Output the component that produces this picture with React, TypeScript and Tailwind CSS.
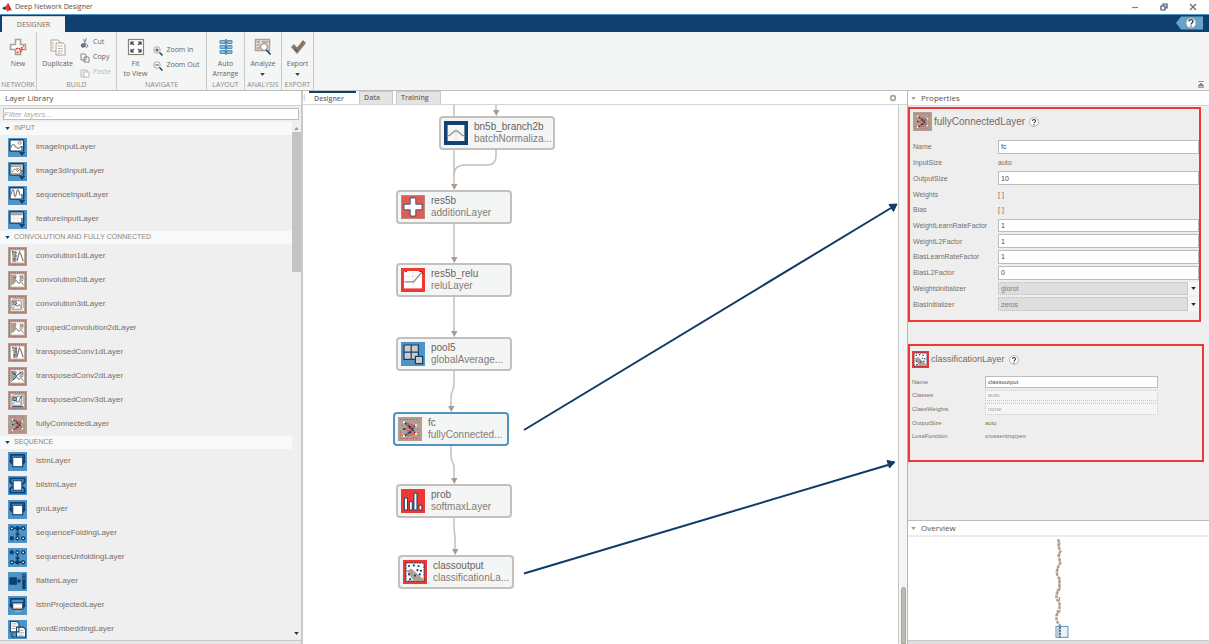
import React from "react";

const SANS = "font-['Liberation_Sans',Arial,sans-serif]";
const UI = "font-['Open_Sans','Noto_Sans',sans-serif]";

const NAVY = "#0f4070";
const BLUE = "#4f94c4";
const TAN = "#b0a093";
const RED = "#ee3831";
const GREY = "#8a817b";

type IconKind =
  | "image" | "image3d" | "sequence" | "feature"
  | "conv1" | "conv2" | "conv3" | "grouped" | "tconv1" | "tconv2" | "tconv3" | "full"
  | "lstm" | "bilstm" | "gru" | "fold" | "unfold" | "flatten" | "projected" | "embedding"
  | "batch" | "add" | "relu" | "pool" | "softmax" | "classify";

function Dots({ pts, r = 1.5, fill = NAVY }: { pts: number[][]; r?: number; fill?: string }) {
  return (
    <>
      {pts.map(([x, y]) => (
        <circle key={`${x}-${y}`} cx={x} cy={y} r={r} fill={fill} />
      ))}
    </>
  );
}

function InputBase({ children }: { children: React.ReactNode }) {
  return (
    <>
      <rect width="20" height="20" fill={BLUE} />
      <rect x="2" y="1.8" width="14.5" height="12" rx="1" fill="#fff" stroke={NAVY} strokeWidth="1.5" />
      {children}
      <path d="M14.7 8.500v8M12.700 15.500l2 2.500 2-2.500z" stroke={NAVY} strokeWidth="1.3" fill={NAVY} />
      <path d="M14.7 10v5" stroke={TAN} strokeWidth=".9" />
    </>
  );
}

function ConvBase({ children }: { children: React.ReactNode }) {
  return (
    <>
      <rect width="20" height="20" fill={TAN} />
      <rect x="3" y="3.500" width="14" height="13" fill="#fff" />
      {children}
      <rect x="1.5" y="1.5" width="17" height="17" fill="none" stroke={RED} strokeWidth="1" strokeDasharray="1 1" />
    </>
  );
}

function glyph(kind: IconKind) {
  switch (kind) {
    case "image":
      return (
        <InputBase>
          <path d="M3 10q2-5 4-2t4 3l3-2" stroke={GREY} fill="none" strokeWidth="1.2" />
          <circle cx="12.3" cy="5" r="1.6" fill="none" stroke={GREY} />
        </InputBase>
      );
    case "image3d":
      return (
        <InputBase>
          <rect x="3" y="4.5" width="10" height="8" fill="none" stroke={GREY} />
          <path d="M3 5l2-2h10v7M4 11l3-4 3 3 3-3" stroke={GREY} fill="none" />
          <circle cx="10" cy="7" r="1.3" fill={TAN} />
        </InputBase>
      );
    case "sequence":
      return (
        <InputBase>
          <path d="M3 10c1.500-8 3-7 3.500-2s2 3 2.500-1 2.500-4 3.500 3" stroke={GREY} fill="none" strokeWidth="1.3" />
        </InputBase>
      );
    case "feature":
      return (
        <InputBase>
          <rect x="3" y="3" width="12.5" height="2.6" fill={TAN} />
          <path d="M3 8.5h12M6.5 6v7M10.5 6v7" stroke="#ddd" strokeWidth=".7" />
        </InputBase>
      );
    case "conv1":
    case "tconv1":
      return (
        <ConvBase>
          <path d="M9.500 15l2.500-10 2 4 2 6" stroke={GREY} fill="none" strokeWidth="1.300" />
          <rect x={kind === "conv1" ? 4.5 : 5.5} y="4" width="4" height="12" fill={TAN} />
          <path d="M5 4v4M8.500 5v8M6.500 12v3" stroke={NAVY} strokeWidth="1" strokeDasharray="2 1.4" />
        </ConvBase>
      );
    case "conv2":
    case "grouped":
    case "tconv2": {
      const line = kind === "grouped" ? GREY : NAVY;
      return (
        <ConvBase>
          <path d="M3 4h5.500v6l-3 3L3 16z" fill={TAN} />
          <path d="M5 14l3.500-4 3 3 2-2 3 4" stroke={TAN} fill="none" strokeWidth="1.300" />
          <path d="M12.500 5.500h4v3.500h-4z" fill={TAN} />
          <path d="M6 8l3-2M12 5.500l4-.5M12 9.500l4 .5" stroke={line} strokeWidth=".9" strokeDasharray="1.500 .8" />
          {kind === "tconv2" && <path d="M4 5l5 4 4-3M5 14l4-4" stroke={NAVY} fill="none" strokeWidth="1" />}
        </ConvBase>
      );
    }
    case "conv3":
    case "tconv3":
      return (
        <ConvBase>
          <path d="M4 6l2-2h10v9l-2 2M14 6v9H4V6z" stroke={GREY} fill="none" strokeWidth=".9" />
          <path d="M5 14l3-4 2 2 2-2 2 4" stroke={TAN} fill="none" strokeWidth="1.200" />
          <path d="M5 7h4v3H5z" fill={TAN} stroke={NAVY} strokeWidth=".8" strokeDasharray={kind === "tconv3" ? "none" : "1.5 1"} />
          {kind === "tconv3" && <path d="M4 16.500h12M12 9l3-4" stroke={NAVY} strokeWidth="1" />}
        </ConvBase>
      );
    case "full":
      return (
        <>
          <rect width="20" height="20" fill={TAN} />
          <path d="M2 2h16M2 18h16M3 7h2M16 4h2M12 17h3M17 10v6M2 12v5" stroke={RED} strokeWidth=".8" strokeDasharray="1 1.600" />
          <path d="M5 4.5l10 3M5 4.5l10 9M5 10l10-3M5 10l10 4M5 16l10-9M5 16l10-2" stroke={RED} strokeWidth=".9" strokeDasharray="2 .8" />
          <path d="M5 4.5l5 3.5 4 5M5 16l6-4 3-5" stroke={NAVY} strokeWidth="1.100" fill="none" strokeDasharray="3 1" />
          <Dots pts={[[5, 4.5], [5, 16], [15, 7], [15, 14]]} r={0.9} fill="#fff" />
          <Dots pts={[[5, 10], [10, 9], [10, 13]]} r={0.9} />
        </>
      );
    case "lstm":
    case "gru":
    case "projected":
      return (
        <>
          <rect width="20" height="20" fill={BLUE} />
          <path d="M3 10V3h14v7M2 9l1.500 2.500L5 9M15 9l1.500 2.500L18 9" stroke={NAVY} strokeWidth="2" fill="none" />
          <rect x="5" y={kind === "projected" ? 7 : 5.5} width="10.5" height={kind === "projected" ? 7 : 10} fill="#fff" stroke={NAVY} strokeWidth="1.1" />
          {kind === "projected" && <path d="M6 8h9M6 13h9M7 16h7" stroke={TAN} strokeWidth="1.5" />}
        </>
      );
    case "bilstm":
      return (
        <>
          <rect width="20" height="20" fill={BLUE} />
          <path d="M2.500 7V2.500h15V7M2.500 13v4.500h15V13M2 6l3 3M18 6l-3 3M2 14l3-3M18 14l-3-3" stroke={NAVY} strokeWidth="2" fill="none" />
          <rect x="5.5" y="5" width="9" height="10" fill="#fff" stroke={NAVY} />
        </>
      );
    case "fold":
    case "unfold": {
      const a = kind === "fold";
      return (
        <>
          <rect width="20" height="20" fill={BLUE} />
          <path d={a ? "M4 4.5h12M10 5v7M8 10l2 2 2-2" : "M4 15h12M10 5v7M8 10l2 2 2-2"} stroke={NAVY} strokeWidth="1.500" fill="none" />
          <Dots pts={[[4, 4.5], [10, 4.5], [16, 4.5], [4, 15], [10, 15], [16, 15]]} r={2.3} />
          <Dots pts={a ? [[4, 4.5], [16, 4.5], [10, 15], [16, 15]] : [[10, 4.5], [16, 4.5], [4, 15], [16, 15]]} r={0.9} fill="#fff" />
        </>
      );
    }
    case "flatten":
      return (
        <>
          <rect width="20" height="20" fill={BLUE} />
          <path d="M2 6h7v7H2zM9 9.5h4M11 7.500l2.500 2-2.500 2z" fill={NAVY} stroke={NAVY} />
          <rect x="15" y="2" width="3.6" height="16" fill={NAVY} />
          <path d="M16 4h1.6M16 7h1.6" stroke={TAN} />
        </>
      );
    case "embedding":
      return (
        <>
          <rect width="20" height="20" fill={BLUE} />
          <path d="M2.5 1.5h7l2 2v9h-9zM9 7.5h7l2.5 2.5v8H9z" fill="#fff" stroke={NAVY} strokeWidth="1.1" />
          <path d="M4 4h5M4 6.5h4M4 9h4M11 11h5M11 13.5h6M11 16h5" stroke={TAN} />
          <path d="M4 14v4h4" stroke={NAVY} fill="none" />
        </>
      );
    case "batch":
      return (
        <>
          <rect width="20" height="20" fill={NAVY} />
          <rect x="3" y="3.3" width="14" height="13.4" fill="#f7f8f8" />
          <path d="M10 3.3v13.4M3 10h14" stroke="#ddd" strokeWidth=".6" />
          <path d="M3 12.500C6 12.500 7 8 10 8s4 4.500 7 4.500" stroke={GREY} strokeWidth="1" fill="none" />
        </>
      );
    case "add":
      return (
        <>
          <rect width="20" height="20" fill="#dc5d55" stroke={TAN} strokeWidth="1" />
          <path d="M7.700 2.500h4.600v5.200h5.200v4.600h-5.200v5.200H7.700v-5.200H2.500V7.700h5.200z" fill="#fff" stroke={NAVY} strokeWidth=".6" />
        </>
      );
    case "relu":
      return (
        <>
          <rect width="20" height="20" fill={RED} />
          <rect x="2.500" y="2.500" width="15" height="14.500" fill="#fff" />
          <path d="M10 3v14M3 7h14" stroke="#ddd" strokeWidth=".6" />
          <path d="M3 11.500h7.500l6-7" stroke={GREY} strokeWidth="1" fill="none" />
          <path d="M3 3h2M15 3h2.500v2" stroke={NAVY} strokeWidth=".8" fill="none" />
        </>
      );
    case "pool":
      return (
        <>
          <rect width="20" height="20" fill={BLUE} />
          <path d="M2.500 2.500h12v12h-12zM8.500 2.500v12M2.500 8.500h12" fill="#cfcac6" stroke={NAVY} />
          <rect x="12" y="12" width="6" height="6" fill="#cfcac6" stroke={NAVY} />
        </>
      );
    case "softmax":
      return (
        <>
          <rect width="20" height="20" fill={RED} />
          <path d="M2.800 7.500h2.600v10H2.800zM7 10.500h2.400v7H7zM10.800 3.500h2.500v14h-2.500zM15 13.500h2.400v4H15z" fill="#fff" stroke={NAVY} strokeWidth=".8" />
        </>
      );
    case "classify":
      return (
        <>
          <rect width="20" height="20" fill={RED} />
          <rect x="2.500" y="2.500" width="15" height="15" fill="#fff" stroke={NAVY} strokeWidth=".9" strokeDasharray="1.500 .7" />
          <path d="M3 9l4-2 10 9v1.500H9z" fill={TAN} />
          <Dots pts={[[5, 5], [9, 4.500], [13, 5], [15, 9], [12, 8.500], [5, 12], [6, 16], [10, 13], [14, 12]]} r={0.9} />
        </>
      );
  }
}

function LayerIcon({ kind, className }: { kind: IconKind; className: string }) {
  return (
    <svg viewBox="0 0 20 20" className={`shrink-0 ${className}`} aria-hidden="true">
      {glyph(kind)}
    </svg>
  );
}

const sections: { title: string; layers: [string, IconKind][] }[] = [
  {
    title: "INPUT",
    layers: [
      ["imageInputLayer", "image"],
      ["image3dInputLayer", "image3d"],
      ["sequenceInputLayer", "sequence"],
      ["featureInputLayer", "feature"],
    ],
  },
  {
    title: "CONVOLUTION AND FULLY CONNECTED",
    layers: [
      ["convolution1dLayer", "conv1"],
      ["convolution2dLayer", "conv2"],
      ["convolution3dLayer", "conv3"],
      ["groupedConvolution2dLayer", "grouped"],
      ["transposedConv1dLayer", "tconv1"],
      ["transposedConv2dLayer", "tconv2"],
      ["transposedConv3dLayer", "tconv3"],
      ["fullyConnectedLayer", "full"],
    ],
  },
  {
    title: "SEQUENCE",
    layers: [
      ["lstmLayer", "lstm"],
      ["bilstmLayer", "bilstm"],
      ["gruLayer", "gru"],
      ["sequenceFoldingLayer", "fold"],
      ["sequenceUnfoldingLayer", "unfold"],
      ["flattenLayer", "flatten"],
      ["lstmProjectedLayer", "projected"],
      ["wordEmbeddingLayer", "embedding"],
    ],
  },
];

function Caret({ className = "" }: { className?: string }) {
  return (
    <svg viewBox="0 0 6 4" className={`h-[3px] w-[5px] shrink-0 ${className}`} aria-hidden="true">
      <path d="M0 0h6L3 4z" fill="currentColor" />
    </svg>
  );
}

function TitleBar() {
  return (
    <header className={`flex h-[14px] shrink-0 items-center bg-white pl-[2px] pr-3 text-[7px] text-[#57504b] ${UI}`}>
      <svg viewBox="0 0 20 18" className="mr-[3px] h-[9px] w-[10px]" aria-hidden="true">
        <path d="M0 10l6-3 3 3-4 4z" fill={NAVY} />
        <path d="M6 7c3-1 4-6 6-7 2 2 4 10 8 15-3-2-5-1-9 3-1-4-3-5-6-4l4-4z" fill={RED} />
        <path d="M12 0c2 2 4 10 8 15-3-2-4-1-5 0-1-5-2-11-3-15z" fill="#8d2a20" />
      </svg>
      <h1 className="flex-1">Deep Network Designer</h1>
      <div className="flex items-center gap-[21px]">
        <button aria-label="Minimize">
          <svg viewBox="0 0 8 8" className="size-2"><path d="M1 4.500h6" stroke={GREY} strokeWidth="1.200" /></svg>
        </button>
        <button aria-label="Restore">
          <svg viewBox="0 0 8 8" className="size-2">
            <path d="M1 3h4v4H1zM3 3V1h4v4H5" fill="none" stroke="#40506a" strokeWidth="1.200" />
          </svg>
        </button>
        <button aria-label="Close">
          <svg viewBox="0 0 8 8" className="size-2"><path d="M1 1l6 6M7 1L1 7" stroke="#6f6660" strokeWidth="1.200" /></svg>
        </button>
      </div>
    </header>
  );
}

function Ribbon() {
  return (
    <div className="flex h-[18px] shrink-0 items-end justify-between border-t border-[#4f94c4] bg-[#0f4070] pl-[2px] pr-[6px]">
      <button className={`h-4 w-[63px] border-t border-[#d9d2cb] bg-[#f4f5f5] text-[7px] leading-[13px] text-[#736a64] ${UI}`}>DESIGNER</button>
      <button aria-label="Help" className="mb-[2px]">
        <svg viewBox="0 0 27 14" className="h-[14px] w-[27px]">
          <path d="M0 7l5-6.500h22v13H5z" fill="#66a3cc" />
          <circle cx="15" cy="7" r="5" fill="#fff" stroke={TAN} />
          <path d="M13 5.500c0-2.500 4-2.500 4 0 0 1.500-2 1.500-2 3M15 9.500v1.300" stroke={NAVY} strokeWidth="1.300" fill="none" />
        </svg>
      </button>
    </div>
  );
}

function Group({ label, width, children }: { label: string; width: string; children: React.ReactNode }) {
  return (
    <section className={`flex shrink-0 flex-col border-r border-[#c9c9c9] ${width}`}>
      <div className="flex min-h-0 flex-1 justify-center pt-[6px]">{children}</div>
      <h2 className="flex h-[10px] shrink-0 items-center justify-center whitespace-nowrap text-[7px] leading-[10px] text-[#8f8781]">
        {label}
      </h2>
    </section>
  );
}

function BigTool({ icon, lines, menu = false }: { icon: React.ReactNode; lines: string[]; menu?: boolean }) {
  return (
    <button className="flex flex-col items-center whitespace-nowrap leading-[10px]">
      <svg viewBox="0 0 18 18" className="mb-[3px] size-[18px]" aria-hidden="true">{icon}</svg>
      {lines.map((l) => (
        <span key={l}>{l}</span>
      ))}
      {menu && <Caret className="mt-1 text-[#3c3a42]" />}
    </button>
  );
}

function SmallTool({ icon, label, muted = false }: { icon: React.ReactNode; label: string; muted?: boolean }) {
  return (
    <button disabled={muted} className={`flex h-[15px] items-center gap-[3px] whitespace-nowrap ${muted ? "text-[#c0bcb9]" : ""}`}>
      <svg viewBox="0 0 10 10" className="size-[10px]" aria-hidden="true">{icon}</svg>
      {label}
    </button>
  );
}

const pageStack = (c: string) => <path d="M1 1h4l1 1v5H1zM4 4h4l1 1v4H4z" fill="#fff" stroke={c} />;

const magnifier = (plus: boolean) => (
  <>
    <circle cx="4" cy="4" r="3.200" fill="#fff" stroke={TAN} />
    <path d={plus ? "M2.300 4h3.400M4 2.300v3.400" : "M2.300 4h3.400"} stroke={NAVY} />
    <path d="M6.500 6.500L9.500 9.500" stroke={NAVY} strokeWidth="1.400" />
  </>
);

function Toolstrip() {
  return (
    <div className={`flex h-[59px] shrink-0 border-b border-[#bdbdbd] bg-[#f4f5f5] text-[7px] text-[#6b635e] ${UI}`}>
      <Group label="NETWORK" width="w-[37px]">
        <BigTool
          lines={["New"]}
          icon={
            <>
              <path d="M6.500 1.500h5v5h5v5h-5v5h-5v-5h-5v-5h5z" fill="#fff" stroke={TAN} strokeWidth="1.600" />
              <path d="M7 11l2-1 2 1 4-3M8 15l2-2M11 14l3-3" stroke={RED} strokeWidth="1.600" strokeDasharray="2 .8" fill="none" />
            </>
          }
        />
      </Group>
      <Group label="BUILD" width="w-[80px]">
        <div className="flex items-start gap-[7px]">
          <BigTool
            lines={["Duplicate"]}
            icon={
              <>
                <path d="M2 2h7l2 2v9H2z" fill="#fff" stroke={TAN} />
                <path d="M7 5h7l2 2v10H7z" fill="#fff" stroke={TAN} />
                <path d="M4 4v7M9 8h5M9 10.500h5M9 13h5M9 15h4" stroke={TAN} strokeDasharray="2 .6" />
              </>
            }
          />
          <div className="-mt-[3px] flex flex-col">
            <SmallTool
              label="Cut"
              icon={
                <>
                  <path d="M6.500 0L4 6M3.500 1l2.500 6" stroke={GREY} />
                  <circle cx="3" cy="7.500" r="1.700" fill="#7d8794" stroke="#40506a" />
                  <circle cx="6.500" cy="8" r="1.300" fill="none" stroke={GREY} />
                </>
              }
            />
            <SmallTool label="Copy" icon={pageStack(GREY)} />
            <SmallTool label="Paste" muted icon={<><path d="M1 2h6v7H1z" fill="#eee" stroke="#c0bcb9" /><path d="M4 4h5v5H4z" fill="#fff" stroke="#c0bcb9" /></>} />
          </div>
        </div>
      </Group>
      <Group label="NAVIGATE" width="w-[90px]">
        <div className="flex items-start gap-[6px]">
          <BigTool
            lines={["Fit", "to View"]}
            icon={
              <>
                <rect x="1.500" y="1.500" width="15" height="15" fill="#fff" stroke={GREY} strokeWidth="1.200" />
                <path d="M4 4l3 3M14 4l-3 3M4 14l3-3M14 14l-3-3M4 7V4h3M11 4h3v3M4 11v3h3M11 14h3v-3" stroke="#40454f" strokeWidth="1.200" fill="none" />
              </>
            }
          />
          <div className="flex flex-col pt-[5px]">
            <SmallTool label="Zoom In" icon={magnifier(true)} />
            <SmallTool label="Zoom Out" icon={magnifier(false)} />
          </div>
        </div>
      </Group>
      <Group label="LAYOUT" width="w-[38px]">
        <BigTool
          lines={["Auto", "Arrange"]}
          icon={
            <>
              <path d="M9 1v16M3 4h12M3 9h12M3 14h12" stroke={NAVY} />
              <path d="M3 2.500h5v3H3zM10 2.500h5v3h-5zM3 7.500h5v3H3zM10 7.500h5v3h-5zM3 12.500h5v3H3zM10 12.500h5v3h-5z" fill="#8fbad8" stroke={BLUE} />
            </>
          }
        />
      </Group>
      <Group label="ANALYSIS" width="w-[37px]">
        <BigTool
          menu
          lines={["Analyze"]}
          icon={
            <>
              <path d="M1.500 1.500h14v11h-14z" fill="#e3ddd7" stroke={TAN} strokeWidth="1.500" />
              <path d="M3 4h3M3 7h3M3 10h3M8 4h6" stroke={GREY} />
              <circle cx="10" cy="9" r="3.400" fill="#fff" stroke={GREY} />
              <path d="M12.500 12l4 4.500" stroke={NAVY} strokeWidth="1.600" />
            </>
          }
        />
      </Group>
      <Group label="EXPORT" width="w-[32px]">
        <BigTool
          menu
          lines={["Export"]}
          icon={
            <>
              <path d="M2 9l3-3 3 3.500L14 2l3 3-9 11z" fill="#8b7768" />
              <path d="M6 11l2 2" stroke={NAVY} strokeWidth="1" />
            </>
          }
        />
      </Group>
      <div className="flex flex-1 items-end justify-end pb-[2px] pr-[5px]">
        <button aria-label="Collapse toolstrip">
          <svg viewBox="0 0 6 7" className="h-[7px] w-[6px]"><path d="M0 .500h6M0 6.500h6M3 2L0 5h6z" stroke={GREY} strokeWidth=".8" fill={GREY} /></svg>
        </button>
      </div>
    </div>
  );
}

function Library() {
  return (
    <aside className="flex w-[303px] shrink-0 flex-col border-r-2 border-[#cacaca] bg-[#efefef]">
      <h2 className={`h-[14px] shrink-0 bg-white pl-[5px] text-[8px] leading-[13px] text-[#57504b] ${UI}`}>Layer Library</h2>
      <div className="shrink-0 border-t border-[#d5d5d5] px-[3px] pb-[2px] pt-[2px]">
        <input
          aria-label="Filter layers"
          placeholder="Filter layers..."
          className={`block h-3 w-[296px] border border-[#bdbdbd] bg-white px-0 text-[8px] italic leading-[10px] outline-none placeholder:text-[#b1aaa5] ${SANS}`}
        />
      </div>
      <div className="flex min-h-0 flex-1 overflow-hidden">
        <div className="flex-1">
          {sections.map((s) => (
            <section key={s.title}>
              <h3 className="flex h-[13px] items-center gap-[4px] bg-[#f8f9f9] pl-[5px] text-[7px] text-[#8f8781]">
                <Caret className="text-[#0f4070]" />
                {s.title}
              </h3>
              <ul>
                {s.layers.map(([name, kind]) => (
                  <li key={name} className="flex h-6 items-center gap-[9px] pl-2 text-[8px] text-[#786e67]">
                    <LayerIcon kind={kind} className="size-[19px]" />
                    {name}
                  </li>
                ))}
              </ul>
            </section>
          ))}
        </div>
        <div className="flex w-[9px] flex-col items-center pb-[5px] pt-[5px]">
          <Caret className="rotate-180 text-[#999]" />
          <div className="mt-[2px] h-[140px] w-full bg-[#c6c4c2]" />
          <Caret className="mt-auto text-[#333]" />
        </div>
      </div>
      <div className="h-1 shrink-0 border-t border-[#c8c8c8] bg-[#e6e6e6]" />
    </aside>
  );
}

const nodes: { name: string; type: string; kind: IconKind; place: string }[] = [
  { name: "bn5b_branch2b", type: "batchNormaliza...", kind: "batch", place: "left-[136px] top-[11px] border-[#c3c0bd]" },
  { name: "res5b", type: "additionLayer", kind: "add", place: "left-[93px] top-[85px] border-[#c3c0bd]" },
  { name: "res5b_relu", type: "reluLayer", kind: "relu", place: "left-[93px] top-[158px] border-[#c3c0bd]" },
  { name: "pool5", type: "globalAverage...", kind: "pool", place: "left-[93px] top-[232px] border-[#c3c0bd]" },
  { name: "fc", type: "fullyConnected...", kind: "full", place: "left-[90px] top-[307px] border-[#4f94c4]" },
  { name: "prob", type: "softmaxLayer", kind: "softmax", place: "left-[93px] top-[379px] border-[#c3c0bd]" },
  { name: "classoutput", type: "classificationLa...", kind: "classify", place: "left-[95px] top-[450px] border-[#c3c0bd]" },
];

function Diagram() {
  return (
    <div className="relative min-h-0 flex-1 overflow-hidden bg-white">
      <svg className="absolute left-0 top-0 h-[535px] w-[595px]" viewBox="0 0 595 535" aria-hidden="true">
        <g fill="none" stroke="#c3c0bd" strokeWidth="1.500">
          <path d="M151 0v80M193 0v6M193 45v6q0 9-9 9h-22q-11 0-11 10M151 119v34M151 192v34" />
          <path d="M151 266v12q0 5-1.500 8t-1.500 6v11M148 341v10q0 3 1.500 6t1.500 6v11M151 413v10l1 10v12" />
        </g>
        <g fill="#aa9c91">
          <path d="M190 5h6.500l-3.200 6zM148 79h6.500l-3.200 6zM148 152h6.500l-3.200 6zM148 226h6.500l-3.200 6zM145 301h6.500l-3.200 6zM148 373h6.500l-3.200 6zM149 444h6.500l-3.200 6z" />
        </g>
        <g stroke="#113b66" strokeWidth="2" fill="#113b66">
          <path d="M221 325L588 103" />
          <path d="M594 99l-8 .500 4.500 7z" strokeWidth="1" />
          <path d="M221 468.500L585 360" />
          <path d="M592 357l-8-1.500 2.500 7.500z" strokeWidth="1" />
        </g>
      </svg>
      {nodes.map((n) => (
        <div key={n.name} className={`absolute flex h-[34px] w-[116px] items-center gap-[6px] rounded-[4px] border-2 bg-[#f4f5f5] pl-[3px] ${n.place}`}>
          <LayerIcon kind={n.kind} className="size-6" />
          <div className="whitespace-nowrap text-[10px] leading-3 text-[#857b74]">
            <div className="text-[#6b635e]">{n.name}</div>
            <div>{n.type}</div>
          </div>
        </div>
      ))}
    </div>
  );
}

function Workspace() {
  return (
    <main className="flex min-w-0 flex-1 flex-col">
      <div className={`flex h-[14px] shrink-0 items-center gap-[3px] border-b border-[#d5d5d5] bg-white text-[7px] font-semibold text-[#736a64] ${UI}`}>
        <span className="w-[3px] text-center font-normal text-[#aaa]">(</span>
        <button className="h-full w-[47px] border-t-2 border-[#0f4070] bg-white pl-[5px] text-left leading-[11px]">Designer</button>
        <button className="h-full w-[34px] border-x border-t border-[#cfc6bf] bg-[#e4e4e4] pl-[4px] text-left leading-[12px]">Data</button>
        <button className="h-full w-[45px] border-x border-t border-[#cfc6bf] bg-[#e4e4e4] pl-[4px] text-left leading-[12px]">Training</button>
        <button aria-label="Document actions" className="ml-auto mr-[10px]">
          <svg viewBox="0 0 8 8" className="size-2"><circle cx="4" cy="4" r="2.400" fill="none" stroke={TAN} strokeWidth="1.600" /></svg>
        </button>
      </div>
      <div className="flex min-h-0 flex-1">
        <Diagram />
        <div className="flex w-[9px] flex-col justify-end border-l border-[#c9c9c9] bg-[#f4f5f5] pl-[2px]">
          <div className="h-[57px] w-[5px] rounded-t-sm border border-[#aaa19a] bg-[#c0bab5]" />
        </div>
      </div>
    </main>
  );
}

function HelpMark() {
  return (
    <button aria-label="Layer help">
      <svg viewBox="0 0 10 10" className="size-[10px]">
        <circle cx="5" cy="5" r="4.400" fill="#fff" stroke={TAN} strokeWidth=".8" />
        <path d="M3.500 4c0-2 3-2 3 0 0 1.200-1.500 1-1.500 2.300M5 7.200v1.200" stroke={NAVY} strokeWidth="1.100" fill="none" />
      </svg>
    </button>
  );
}

type Field = [label: string, value: string, type: "input" | "text" | "select" | "disabled"];

const fcFields: Field[] = [
  ["Name", "fc", "input"],
  ["InputSize", "auto", "text"],
  ["OutputSize", "10", "input"],
  ["Weights", "[ ]", "text"],
  ["Bias", "[ ]", "text"],
  ["WeightLearnRateFactor", "1", "input"],
  ["WeightL2Factor", "1", "input"],
  ["BiasLearnRateFactor", "1", "input"],
  ["BiasL2Factor", "0", "input"],
  ["WeightsInitializer", "glorot", "select"],
  ["BiasInitializer", "zeros", "select"],
];

const classFields: Field[] = [
  ["Name", "classoutput", "input"],
  ["Classes", "auto", "disabled"],
  ["ClassWeights", "none", "disabled"],
  ["OutputSize", "auto", "text"],
  ["LossFunction", "crossentropyex", "text"],
];

function FieldRow({ field, prefix }: { field: Field; prefix: string }) {
  const [label, value, type] = field;
  const id = `${prefix}-${label}`;
  return (
    <>
      <label htmlFor={id} className="text-[#786e67]">{label}</label>
      {type === "text" && <output id={id} className="text-[#786e67]">{value}</output>}
      {type === "input" && (
        <input id={id} defaultValue={value} className="h-[calc(100%-2px)] w-full border border-[#bdbdbd] bg-white px-[2px] text-[#4f4843] outline-none" />
      )}
      {type === "disabled" && (
        <input id={id} defaultValue={value} disabled className="h-[calc(100%-2px)] w-full border border-dotted border-[#c9c9c9] bg-[#f4f5f5] px-[2px] text-[#aaa39e]" />
      )}
      {type === "select" && (
        <div className="relative h-[calc(100%-2px)]">
          <select id={id} defaultValue={value} className="block h-full w-full appearance-none border border-dotted border-[#bdbdbd] bg-[#dedede] px-[2px] py-0 text-[#857b74] outline-none">
            <option>{value}</option>
          </select>
          <span className="pointer-events-none absolute inset-y-0 right-0 flex w-3 items-center justify-center border-l border-[#c9c9c9] bg-[#f4f5f5] text-[#0f2a4a]">
            <Caret />
          </span>
        </div>
      )}
    </>
  );
}

function PanelTitle({ children }: { children: React.ReactNode }) {
  return (
    <h2 className={`flex h-[14px] shrink-0 items-center gap-[5px] bg-white pl-[3px] text-[8px] text-[#57504b] ${UI}`}>
      <Caret className="text-[#aa9c91]" />
      {children}
    </h2>
  );
}

function OverviewMap() {
  return (
    <svg viewBox="0 0 302 103" className="h-[103px] w-[302px] max-w-full" aria-hidden="true">
      <path d="M151 2v8l2 4-2 4 2 8-2 3-2 6 1 4 2 3v10l-3 5v5l3 4v8l-3 4v6l3 4v8" fill="none" stroke={TAN} strokeWidth="2.500" strokeDasharray="3 1" />
      <path d="M152 4v8M152 16v12M150 30v6M152 40v12M150 52v6M152 60v11M150 73v6" fill="none" stroke={TAN} strokeWidth="1.500" strokeDasharray="4 1" />
      <rect x="148.500" y="89.500" width="12" height="11" fill="#eef0f1" stroke={BLUE} />
      <path d="M149 91h3v9h-3z" fill="#c9c9c9" />
      <path d="M152.500 90v10" stroke={NAVY} strokeWidth="1.500" strokeDasharray="2 1" />
    </svg>
  );
}

function Inspector() {
  return (
    <aside className="flex w-[302px] shrink-0 flex-col border-l border-[#bdb5af] bg-[#eeeeee]">
      <PanelTitle>Properties</PanelTitle>
      <div className="min-h-0 flex-1 overflow-hidden border-t border-[#d5d5d5] pt-px">
        <section className="mr-2 h-[215px] border-2 border-[#ee3831] pl-[3px] pt-[3px]">
          <h3 className="mb-[8px] flex h-[19px] items-center gap-[2px] text-[10px] text-[#736a64]">
            <LayerIcon kind="full" className="size-[19px]" />
            <span className="mr-[2px]">fullyConnectedLayer</span>
            <HelpMark />
          </h3>
          <div className="grid h-[173px] auto-rows-fr grid-cols-[85px_1fr] items-center text-[7px] leading-[9px]">
            {fcFields.map((f) => (
              <FieldRow key={f[0]} field={f} prefix="fc" />
            ))}
          </div>
        </section>
        <section className="mr-[5px] mt-[22px] h-[118px] border-2 border-[#ee3831] pl-[2px] pt-[5px]">
          <h3 className="mb-[7px] flex h-[17px] items-center gap-[2px] text-[9px] text-[#736a64]">
            <LayerIcon kind="classify" className="size-[17px]" />
            <span className="mr-[2px]">classificationLayer</span>
            <HelpMark />
          </h3>
          <div className="mr-[44px] grid h-[68px] auto-rows-fr grid-cols-[73px_1fr] items-center text-[6px] leading-[8px]">
            {classFields.map((f) => (
              <FieldRow key={f[0]} field={f} prefix="class" />
            ))}
          </div>
        </section>
      </div>
      <div className="shrink-0 border-t border-[#bdbdbd]">
        <PanelTitle>Overview</PanelTitle>
        <div className="flex justify-center border-t-2 border-[#ececec] bg-white">
          <OverviewMap />
        </div>
        <div className="h-1 border-t border-[#c8c8c8] bg-[#dedede]" />
      </div>
    </aside>
  );
}

export default function App() {
  return (
    <div className={`flex h-screen flex-col overflow-hidden bg-white ${SANS}`}>
      <TitleBar />
      <Ribbon />
      <Toolstrip />
      <div className="flex min-h-0 flex-1">
        <Library />
        <Workspace />
        <Inspector />
      </div>
    </div>
  );
}
